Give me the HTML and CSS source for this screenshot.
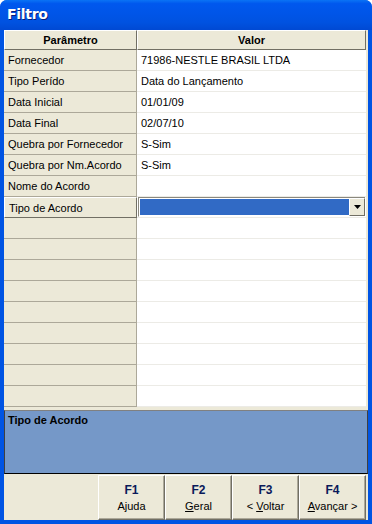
FILE: index.html
```html
<!DOCTYPE html>
<html lang="pt">
  <head>
    <meta charset="UTF-8" />
    <title>Filtro</title>
    <link rel="stylesheet" href="styles.css">
  </head>
  <body>
    <div class="window">
      <!-- Title bar -->
      <div class="titlebar">Filtro</div>

      <div class="client">
        <!-- Parameter grid -->
        <div class="grid">
          <div class="row head">
            <div class="cell param">Parâmetro</div>
            <div class="cell value">Valor</div>
          </div>
          <div class="row">
            <div class="cell param">Fornecedor</div>
            <div class="cell value">71986-NESTLE BRASIL LTDA</div>
          </div>
          <div class="row">
            <div class="cell param">Tipo Perído</div>
            <div class="cell value">Data do Lançamento</div>
          </div>
          <div class="row">
            <div class="cell param">Data Inicial</div>
            <div class="cell value">01/01/09</div>
          </div>
          <div class="row">
            <div class="cell param">Data Final</div>
            <div class="cell value">02/07/10</div>
          </div>
          <div class="row">
            <div class="cell param">Quebra por Fornecedor</div>
            <div class="cell value">S-Sim</div>
          </div>
          <div class="row">
            <div class="cell param">Quebra por Nm.Acordo</div>
            <div class="cell value">S-Sim</div>
          </div>
          <div class="row">
            <div class="cell param">Nome do Acordo</div>
            <div class="cell value"></div>
          </div>
          <div class="row selected">
            <div class="cell param">Tipo de Acordo</div>
            <div class="cell value">
              <div class="combo">
                <div class="combo-text"></div>
                <div class="combo-btn">
                  <svg width="7" height="4" viewBox="0 0 7 4"><path d="M0 0h7L3.5 4z" fill="#000"/></svg>
                </div>
              </div>
            </div>
          </div>
          <div class="row"><div class="cell param"></div><div class="cell value"></div></div>
          <div class="row"><div class="cell param"></div><div class="cell value"></div></div>
          <div class="row"><div class="cell param"></div><div class="cell value"></div></div>
          <div class="row"><div class="cell param"></div><div class="cell value"></div></div>
          <div class="row"><div class="cell param"></div><div class="cell value"></div></div>
          <div class="row"><div class="cell param"></div><div class="cell value"></div></div>
          <div class="row"><div class="cell param"></div><div class="cell value"></div></div>
          <div class="row"><div class="cell param"></div><div class="cell value"></div></div>
          <div class="row"><div class="cell param"></div><div class="cell value"></div></div>
        </div>

        <!-- Description -->
        <div class="desc">Tipo de Acordo</div>

        <!-- Buttons -->
        <div class="buttons">
          <button class="btn"><span class="key">F1</span><span>Ajuda</span></button>
          <button class="btn"><span class="key">F2</span><span><u>G</u>eral</span></button>
          <button class="btn"><span class="key">F3</span><span>&lt; <u>V</u>oltar</span></button>
          <button class="btn"><span class="key">F4</span><span><u>A</u>vançar &gt;</span></button>
        </div>
      </div>
    </div>
  </body>
</html>
```

FILE: styles.css
```css
:root {
  --face: #ece9d8;
  --shadow: #aca899;
  --dark: #716f64;
  --xp-blue: #0054e3;
}

* {
  margin: 0;
  padding: 0;
  box-sizing: border-box;
}

body {
  background: #fff;
  font-family: "Liberation Sans", Arial, sans-serif;
  font-size: 11px;
  color: #000;
}

.window {
  width: 372px;
  height: 524px;
  display: flex;
  flex-direction: column;
  background: var(--xp-blue);
  border-radius: 7px 7px 0 0;
  overflow: hidden;
}

.titlebar {
  height: 30px;
  padding: 6px 0 0 7px;
  color: #fff;
  font-family: "DejaVu Sans", sans-serif;
  font-weight: bold;
  font-size: 14px;
  letter-spacing: -0.3px;
  text-shadow: 1px 1px 0 #0a1e7a;
  background: linear-gradient(#0a73f5 0%, #0058ee 12%, #0055e8 45%, #0052e0 75%, #0049d3 100%);
}

.client {
  flex: 1;
  margin: 0 4px 4px 4px;
  background: var(--face);
  display: flex;
  flex-direction: column;
}

/* Grid */
.grid {
  width: 362px;
  background: #fff;
}

.row {
  display: flex;
  height: 21px;
}

.cell {
  display: flex;
  align-items: center;
  padding-left: 4px;
  white-space: nowrap;
}

.cell.param {
  width: 133px;
  background: var(--face);
  border-bottom: 1px solid var(--shadow);
  border-right: 1px solid var(--shadow);
}

.cell.value {
  flex: 1;
  border-bottom: 1px solid #ecebe6;
}

.row.head {
  height: 20px;
}

.row.head .cell {
  justify-content: center;
  padding-left: 0;
  font-weight: bold;
  background: var(--face);
  border-top: 1px solid #fff;
  border-left: 1px solid #fff;
  border-right: 1px solid var(--dark);
  border-bottom: 1px solid var(--dark);
}

.row.selected .cell.param {
  border-top: 1px solid #fff;
  border-left: 1px solid #fff;
  border-right: 1px solid var(--dark);
  border-bottom: 1px solid var(--dark);
}

.row.selected .cell.value {
  padding: 0 1px 0 1px;
  align-items: stretch;
}

.combo {
  flex: 1;
  display: flex;
  border-top: 1px solid #8a887e;
  border-left: 1px solid #8a887e;
  border-bottom: 1px solid #fff;
  background: #fff;
}

.combo-text {
  flex: 1;
  background: #316ac5;
  margin: 1px 0 1px 1px;
}

.combo-btn {
  width: 16px;
  display: flex;
  align-items: center;
  justify-content: center;
  background: var(--face);
  border-top: 1px solid #fff;
  border-left: 1px solid #fff;
  border-right: 1px solid var(--dark);
  border-bottom: 1px solid var(--dark);
}

/* Description panel */
.desc {
  margin-top: 3px;
  height: 64px;
  padding: 3px 3px;
  background: #7598c8;
  font-weight: bold;
  border-top: 1px solid #808080;
  border-left: 1px solid #404040;
  border-right: 1px solid #404040;
  border-bottom: 1px solid #000;
}

/* Buttons */
.buttons {
  flex: 1;
  display: flex;
  justify-content: flex-end;
  padding: 1px 2px 0 0;
}

.btn {
  width: 67px;
  display: flex;
  flex-direction: column;
  align-items: center;
  justify-content: center;
  gap: 3px;
  font-family: "Liberation Sans", Arial, sans-serif;
  font-size: 11px;
  color: #000;
  background: var(--face);
  border-top: 1px solid #fff;
  border-left: 1px solid #fff;
  border-right: 1px solid var(--dark);
  border-bottom: 1px solid var(--dark);
  box-shadow: inset -1px -1px 0 var(--shadow);
}

.btn .key {
  font-weight: bold;
  font-size: 12px;
  color: #0a1a5a;
}
```
